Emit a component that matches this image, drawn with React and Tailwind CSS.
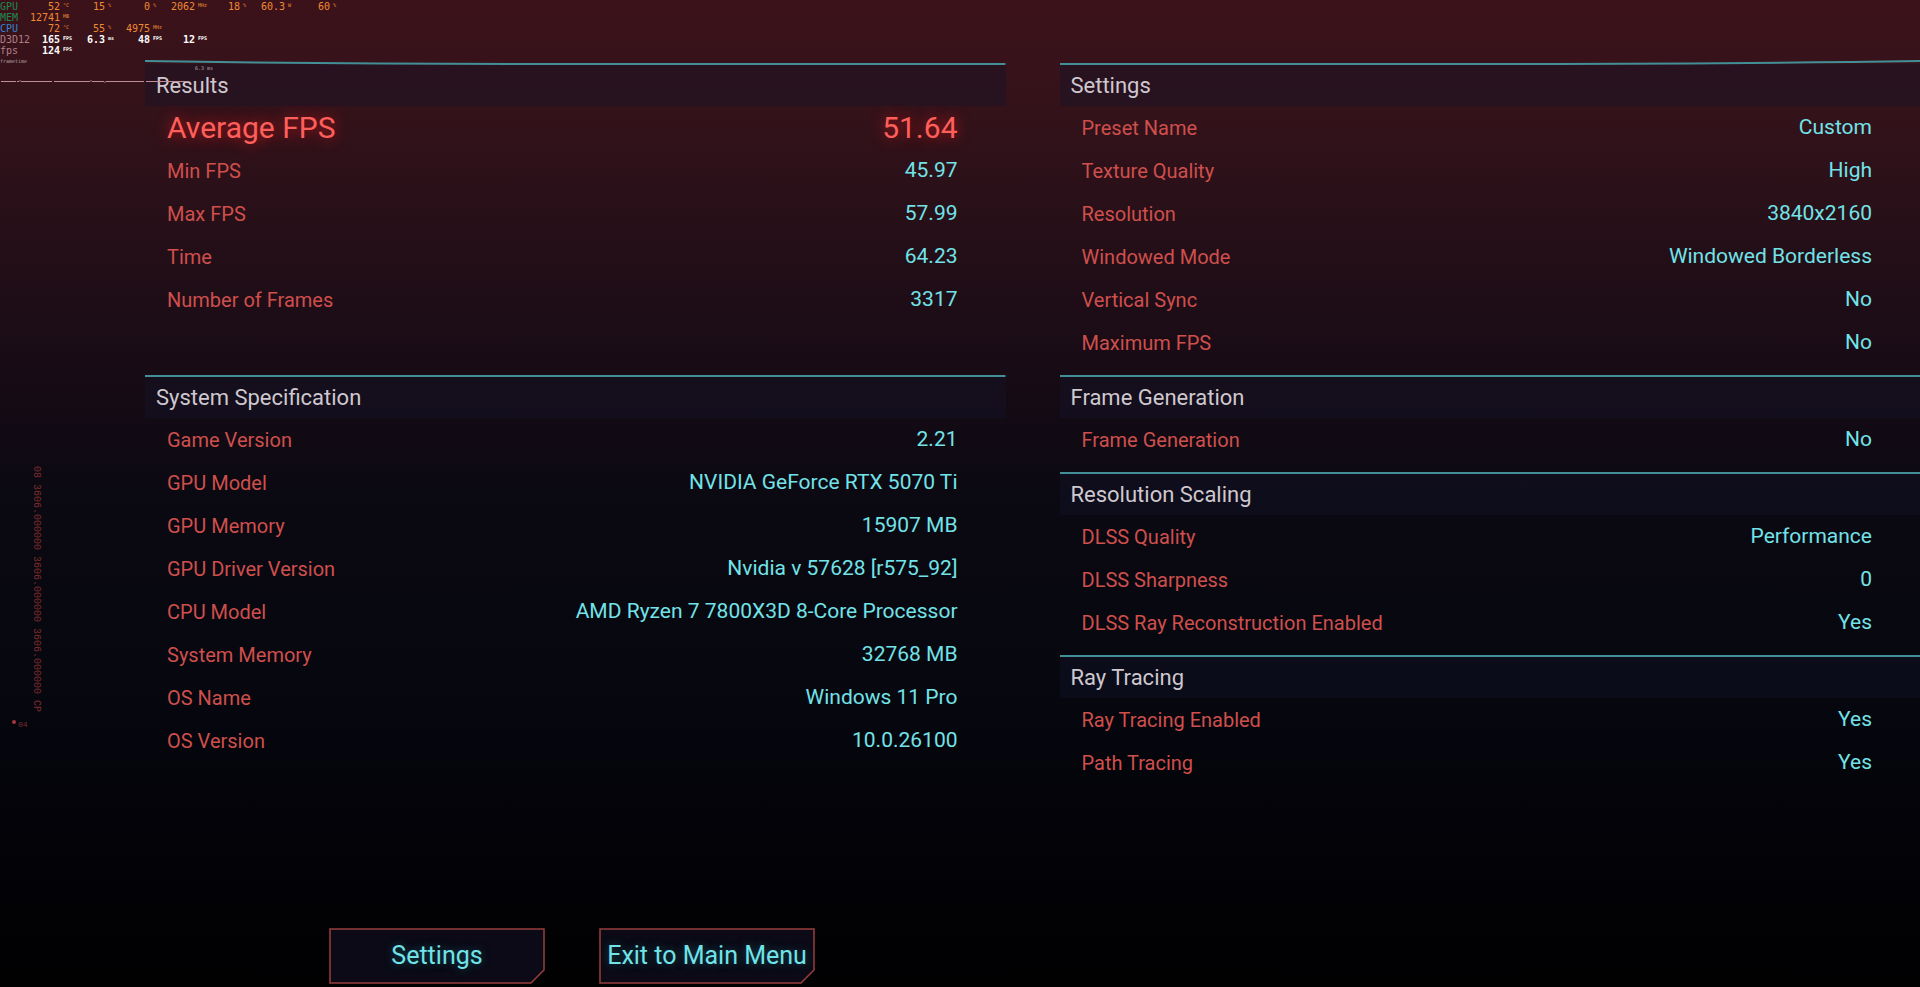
import clsx from 'clsx';

const results = [
  { label: 'Average FPS', value: '51.64', highlight: true },
  { label: 'Min FPS', value: '45.97' },
  { label: 'Max FPS', value: '57.99' },
  { label: 'Time', value: '64.23' },
  { label: 'Number of Frames', value: '3317' },
];

const system = [
  { label: 'Game Version', value: '2.21' },
  { label: 'GPU Model', value: 'NVIDIA GeForce RTX 5070 Ti' },
  { label: 'GPU Memory', value: '15907 MB' },
  { label: 'GPU Driver Version', value: 'Nvidia v 57628 [r575_92]' },
  { label: 'CPU Model', value: 'AMD Ryzen 7 7800X3D 8-Core Processor' },
  { label: 'System Memory', value: '32768 MB' },
  { label: 'OS Name', value: 'Windows 11 Pro' },
  { label: 'OS Version', value: '10.0.26100' },
];

const settings = [
  { label: 'Preset Name', value: 'Custom' },
  { label: 'Texture Quality', value: 'High' },
  { label: 'Resolution', value: '3840x2160' },
  { label: 'Windowed Mode', value: 'Windowed Borderless' },
  { label: 'Vertical Sync', value: 'No' },
  { label: 'Maximum FPS', value: 'No' },
];

const frameGeneration = [{ label: 'Frame Generation', value: 'No' }];

const scaling = [
  { label: 'DLSS Quality', value: 'Performance' },
  { label: 'DLSS Sharpness', value: '0' },
  { label: 'DLSS Ray Reconstruction Enabled', value: 'Yes' },
];

const rayTracing = [
  { label: 'Ray Tracing Enabled', value: 'Yes' },
  { label: 'Path Tracing', value: 'Yes' },
];

const hudRows = [
  {
    label: 'GPU',
    labelClass: 'text-[#1c8a4c]',
    valueClass: 'text-[#f08a34]',
    cells: [['52', '°C'], ['15', '%'], ['0', '%'], ['2062', 'MHz'], ['18', '%'], ['60.3', 'W'], ['60', '%']],
  },
  {
    label: 'MEM',
    labelClass: 'text-[#1c8a4c]',
    valueClass: 'text-[#f08a34]',
    cells: [['12741', 'MB']],
  },
  {
    label: 'CPU',
    labelClass: 'text-[#2f86d0]',
    valueClass: 'text-[#f08a34]',
    cells: [['72', '°C'], ['55', '%'], ['4975', 'MHz']],
  },
  {
    label: 'D3D12',
    labelClass: 'text-[#b07f88]',
    valueClass: 'font-bold text-white',
    cells: [['165', 'FPS'], ['6.3', 'ms'], ['48', 'FPS'], ['12', 'FPS']],
  },
  {
    label: 'fps',
    labelClass: 'text-[#b07f88]',
    valueClass: 'font-bold text-white',
    cells: [['124', 'FPS']],
  },
];

function Hud() {
  return (
    <div className="absolute top-0 left-0 pt-px font-['DejaVu_Sans_Mono',monospace] text-[10px] leading-[11px]">
      {hudRows.map((row) => (
        <div key={row.label} className="flex">
          <span className={clsx('w-[30px]', row.labelClass)}>{row.label}</span>
          {row.cells.map(([value, unit], i) => (
            <span key={i} className={clsx('flex w-[45px]', row.valueClass)}>
              <span className="w-[30px] text-right">{value}</span>
              <span className="pl-[3px] text-[5px] leading-[8px]">{unit}</span>
            </span>
          ))}
        </div>
      ))}
      <div className="text-[5px] leading-[10px] text-[#b9a3a8]">frametime</div>
      <div className="pl-[195px] text-[5px] leading-none text-[#b9a3a8]">6.3 ms</div>
      <svg className="mt-2 h-1 w-[190px]" viewBox="0 0 190 4" fill="none" stroke="#c08e97">
        <path d="M1 2.5H16M17 2.5H19L20 1.5L21 2.5H52M54 2.5H90L91 1.5L92 2.5H104L105 3.5L106 2.5H144M146 2.5H189" />
      </svg>
    </div>
  );
}

function SideCode() {
  return (
    <div
      className="absolute top-[466px] left-3 font-['Liberation_Mono',monospace] text-[#7d2a2c]"
      aria-hidden="true"
    >
      <div className="ml-[18px] text-[10px] leading-3 whitespace-nowrap [writing-mode:vertical-rl]">
        08 3606.000000 3606.000000 3606.000000 CP
      </div>
      <div className="mt-2 flex items-start gap-0.5">
        <span className="size-1 rounded-full bg-[#a5383a]" />
        <span className="text-[8px] leading-[10px]">04</span>
      </div>
    </div>
  );
}

function Row({ label, value, highlight }) {
  return (
    <div
      className={clsx(
        'flex h-[43px] items-center justify-between pr-12 pl-[22px]',
        highlight && 'text-[30px] text-[#ff5f5a] [text-shadow:0_0_14px_#c01818]',
      )}
    >
      <dt className={highlight ? '' : 'text-[20px] text-[#cf4f4c]'}>{label}</dt>
      <dd className={highlight ? '' : 'text-[21px] text-[#72e3e8]'}>{value}</dd>
    </div>
  );
}

function Section({ title, rows, line = 'M0 2H860', className }) {
  return (
    <section className={clsx('pb-3', className)}>
      <h2 className="relative flex h-[42px] items-center bg-[#14142a]/40 pl-[11px] text-[22px] text-[#cfc8ce]">
        <svg
          className="absolute -top-0.5 left-0 h-1 w-full overflow-visible"
          viewBox="0 0 860 4"
          preserveAspectRatio="none"
          fill="none"
          stroke="#438f97"
          strokeWidth="2"
        >
          <path d={line} vectorEffect="non-scaling-stroke" />
        </svg>
        {title}
      </h2>
      <dl>
        {rows.map((row) => (
          <Row key={row.label} {...row} />
        ))}
      </dl>
    </section>
  );
}

function MenuButton({ children }) {
  return (
    <button className="relative h-14 w-[216px] text-[25px] text-[#72e3e8] [text-shadow:0_0_8px_#12505a]">
      <svg className="absolute inset-0 size-full" viewBox="0 0 216 56" fill="#0b0a16" stroke="#983f3d" strokeWidth="1.5">
        <path d="M1 1H215V42L202 55H1Z" />
      </svg>
      <span className="relative whitespace-nowrap">{children}</span>
    </button>
  );
}

export default function App() {
  return (
    <div className="relative flex min-h-screen flex-col overflow-hidden bg-[linear-gradient(to_bottom,#3c121a_0%,#33121a_12%,#250f18_24%,#170b15_38%,#0b0912_50%,#06070f_70%,#030308_85%,#010102_100%)] font-['Roboto',sans-serif]">
      <main className="grid grid-cols-2 gap-x-[54px] pt-16 pl-[145px]">
        <div>
          <Section title="Results" rows={results} line="M0 -1Q200 2 430 2H860" className="mb-[43px]" />
          <Section title="System Specification" rows={system} />
        </div>
        <div>
          <Section title="Settings" rows={settings} line="M0 2H380Q660 2 860 -1" />
          <Section title="Frame Generation" rows={frameGeneration} />
          <Section title="Resolution Scaling" rows={scaling} />
          <Section title="Ray Tracing" rows={rayTracing} />
        </div>
      </main>
      <footer className="mt-auto flex gap-[54px] pb-[3px] pl-[329px]">
        <MenuButton>Settings</MenuButton>
        <MenuButton>Exit to Main Menu</MenuButton>
      </footer>
      <SideCode />
      <Hud />
    </div>
  );
}
